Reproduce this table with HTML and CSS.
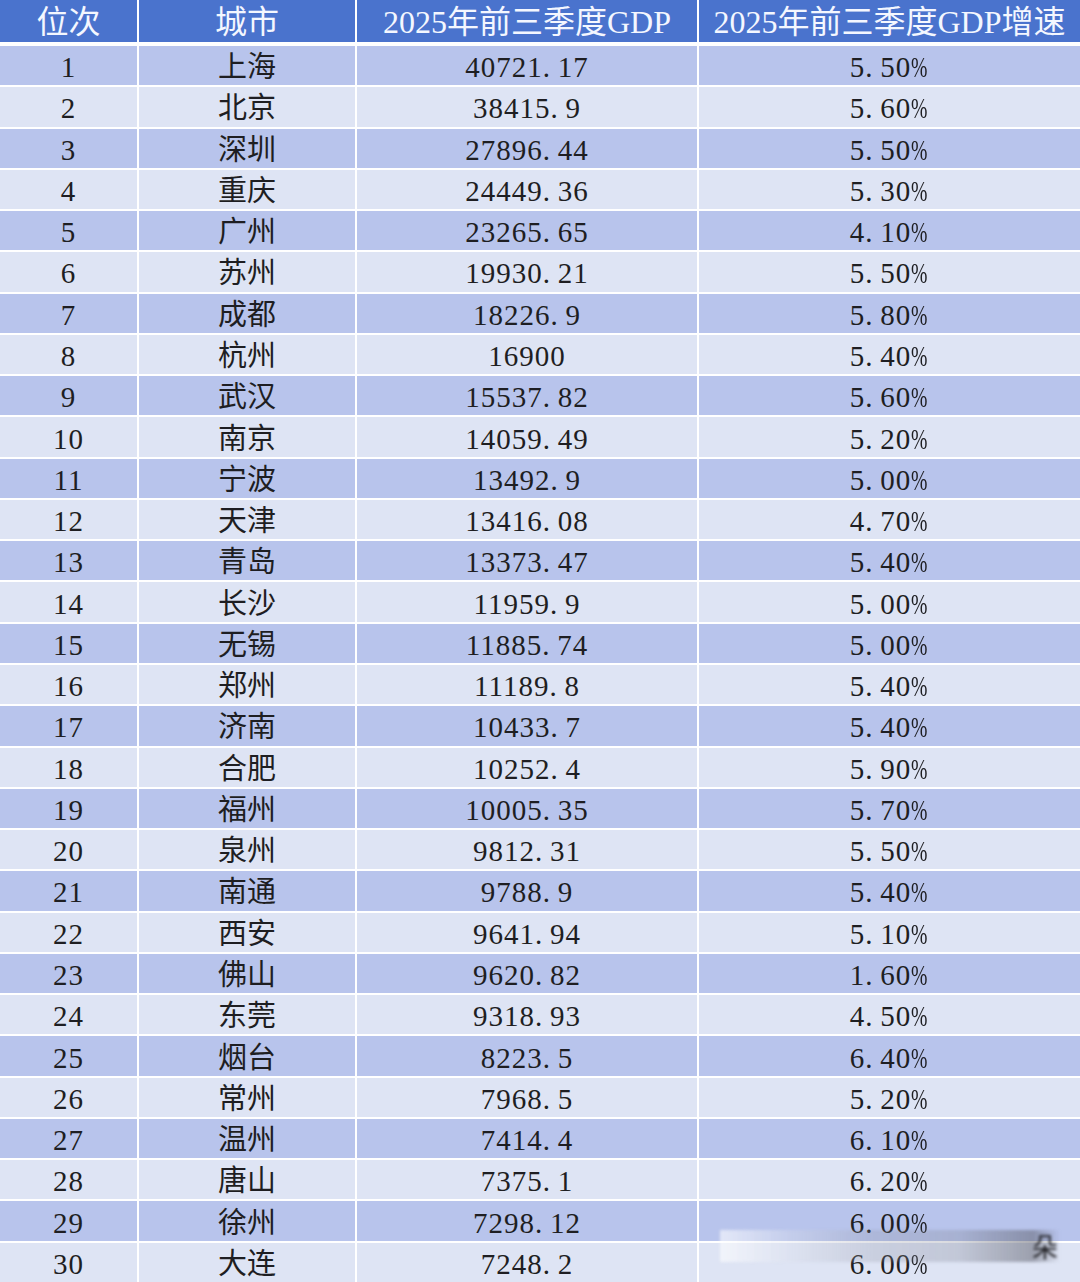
FILE: index.html
```html
<!DOCTYPE html>
<html lang="zh-CN">
<head>
<meta charset="utf-8">
<title>2025年前三季度GDP</title>
<link rel="stylesheet" href="styles.css">
</head>
<body>
<div class="sheet">
  <div class="row head">
    <div class="cell">位次</div>
    <div class="cell">城市</div>
    <div class="cell">2025年前三季度GDP</div>
    <div class="cell">2025年前三季度GDP增速</div>
  </div>
  <div class="body">
    <div class="row odd"><div class="cell num">1</div><div class="cell city">上海</div><div class="cell num">40721<span class="dt">.</span>17</div><div class="cell num">5<span class="dt">.</span>50<span class="pc">%</span></div></div>
    <div class="row even"><div class="cell num">2</div><div class="cell city">北京</div><div class="cell num">38415<span class="dt">.</span>9</div><div class="cell num">5<span class="dt">.</span>60<span class="pc">%</span></div></div>
    <div class="row odd"><div class="cell num">3</div><div class="cell city">深圳</div><div class="cell num">27896<span class="dt">.</span>44</div><div class="cell num">5<span class="dt">.</span>50<span class="pc">%</span></div></div>
    <div class="row even"><div class="cell num">4</div><div class="cell city">重庆</div><div class="cell num">24449<span class="dt">.</span>36</div><div class="cell num">5<span class="dt">.</span>30<span class="pc">%</span></div></div>
    <div class="row odd"><div class="cell num">5</div><div class="cell city">广州</div><div class="cell num">23265<span class="dt">.</span>65</div><div class="cell num">4<span class="dt">.</span>10<span class="pc">%</span></div></div>
    <div class="row even"><div class="cell num">6</div><div class="cell city">苏州</div><div class="cell num">19930<span class="dt">.</span>21</div><div class="cell num">5<span class="dt">.</span>50<span class="pc">%</span></div></div>
    <div class="row odd"><div class="cell num">7</div><div class="cell city">成都</div><div class="cell num">18226<span class="dt">.</span>9</div><div class="cell num">5<span class="dt">.</span>80<span class="pc">%</span></div></div>
    <div class="row even"><div class="cell num">8</div><div class="cell city">杭州</div><div class="cell num">16900</div><div class="cell num">5<span class="dt">.</span>40<span class="pc">%</span></div></div>
    <div class="row odd"><div class="cell num">9</div><div class="cell city">武汉</div><div class="cell num">15537<span class="dt">.</span>82</div><div class="cell num">5<span class="dt">.</span>60<span class="pc">%</span></div></div>
    <div class="row even"><div class="cell num">10</div><div class="cell city">南京</div><div class="cell num">14059<span class="dt">.</span>49</div><div class="cell num">5<span class="dt">.</span>20<span class="pc">%</span></div></div>
    <div class="row odd"><div class="cell num">11</div><div class="cell city">宁波</div><div class="cell num">13492<span class="dt">.</span>9</div><div class="cell num">5<span class="dt">.</span>00<span class="pc">%</span></div></div>
    <div class="row even"><div class="cell num">12</div><div class="cell city">天津</div><div class="cell num">13416<span class="dt">.</span>08</div><div class="cell num">4<span class="dt">.</span>70<span class="pc">%</span></div></div>
    <div class="row odd"><div class="cell num">13</div><div class="cell city">青岛</div><div class="cell num">13373<span class="dt">.</span>47</div><div class="cell num">5<span class="dt">.</span>40<span class="pc">%</span></div></div>
    <div class="row even"><div class="cell num">14</div><div class="cell city">长沙</div><div class="cell num">11959<span class="dt">.</span>9</div><div class="cell num">5<span class="dt">.</span>00<span class="pc">%</span></div></div>
    <div class="row odd"><div class="cell num">15</div><div class="cell city">无锡</div><div class="cell num">11885<span class="dt">.</span>74</div><div class="cell num">5<span class="dt">.</span>00<span class="pc">%</span></div></div>
    <div class="row even"><div class="cell num">16</div><div class="cell city">郑州</div><div class="cell num">11189<span class="dt">.</span>8</div><div class="cell num">5<span class="dt">.</span>40<span class="pc">%</span></div></div>
    <div class="row odd"><div class="cell num">17</div><div class="cell city">济南</div><div class="cell num">10433<span class="dt">.</span>7</div><div class="cell num">5<span class="dt">.</span>40<span class="pc">%</span></div></div>
    <div class="row even"><div class="cell num">18</div><div class="cell city">合肥</div><div class="cell num">10252<span class="dt">.</span>4</div><div class="cell num">5<span class="dt">.</span>90<span class="pc">%</span></div></div>
    <div class="row odd"><div class="cell num">19</div><div class="cell city">福州</div><div class="cell num">10005<span class="dt">.</span>35</div><div class="cell num">5<span class="dt">.</span>70<span class="pc">%</span></div></div>
    <div class="row even"><div class="cell num">20</div><div class="cell city">泉州</div><div class="cell num">9812<span class="dt">.</span>31</div><div class="cell num">5<span class="dt">.</span>50<span class="pc">%</span></div></div>
    <div class="row odd"><div class="cell num">21</div><div class="cell city">南通</div><div class="cell num">9788<span class="dt">.</span>9</div><div class="cell num">5<span class="dt">.</span>40<span class="pc">%</span></div></div>
    <div class="row even"><div class="cell num">22</div><div class="cell city">西安</div><div class="cell num">9641<span class="dt">.</span>94</div><div class="cell num">5<span class="dt">.</span>10<span class="pc">%</span></div></div>
    <div class="row odd"><div class="cell num">23</div><div class="cell city">佛山</div><div class="cell num">9620<span class="dt">.</span>82</div><div class="cell num">1<span class="dt">.</span>60<span class="pc">%</span></div></div>
    <div class="row even"><div class="cell num">24</div><div class="cell city">东莞</div><div class="cell num">9318<span class="dt">.</span>93</div><div class="cell num">4<span class="dt">.</span>50<span class="pc">%</span></div></div>
    <div class="row odd"><div class="cell num">25</div><div class="cell city">烟台</div><div class="cell num">8223<span class="dt">.</span>5</div><div class="cell num">6<span class="dt">.</span>40<span class="pc">%</span></div></div>
    <div class="row even"><div class="cell num">26</div><div class="cell city">常州</div><div class="cell num">7968<span class="dt">.</span>5</div><div class="cell num">5<span class="dt">.</span>20<span class="pc">%</span></div></div>
    <div class="row odd"><div class="cell num">27</div><div class="cell city">温州</div><div class="cell num">7414<span class="dt">.</span>4</div><div class="cell num">6<span class="dt">.</span>10<span class="pc">%</span></div></div>
    <div class="row even"><div class="cell num">28</div><div class="cell city">唐山</div><div class="cell num">7375<span class="dt">.</span>1</div><div class="cell num">6<span class="dt">.</span>20<span class="pc">%</span></div></div>
    <div class="row odd"><div class="cell num">29</div><div class="cell city">徐州</div><div class="cell num">7298<span class="dt">.</span>12</div><div class="cell num">6<span class="dt">.</span>00<span class="pc">%</span></div></div>
    <div class="row even"><div class="cell num">30</div><div class="cell city">大连</div><div class="cell num">7248<span class="dt">.</span>2</div><div class="cell num">6<span class="dt">.</span>00<span class="pc">%</span></div></div>
  </div>
  <div class="smear" aria-hidden="true"><span class="smear-glyph">朵</span></div>
</div>
</body>
</html>
```

FILE: styles.css
```css
html, body {
  margin: 0;
  padding: 0;
  background: #ffffff;
}

.sheet {
  position: relative;
  width: 1080px;
  height: 1282px;
  overflow: hidden;
  background: #ffffff;
  font-family: "Liberation Serif", "Noto Sans CJK SC", serif;
  color: #1e1e22;
}

.row {
  display: grid;
  grid-template-columns: 137px 216px 340px 1fr;
  column-gap: 2px;
}

.cell {
  display: flex;
  align-items: center;
  justify-content: center;
  white-space: nowrap;
}

.head {
  height: 42px;
}

.head .cell {
  background: #4a73cd;
  color: #f4f7ff;
  font-size: 32px;
  line-height: 1;
  padding-top: 1px;
}

.body {
  margin-top: 4px;
  display: flex;
  flex-direction: column;
  gap: 2px;
}

.body .row {
  height: 39.27px;
}

.odd .cell {
  background: #b8c4ec;
}

.even .cell {
  background: #dee4f4;
}

.body .cell {
  font-size: 29px;
  line-height: 1;
  padding-top: 4px;
}

.num {
  letter-spacing: 1px;
}

.city {
  font-weight: 400;
}

.dt {
  display: inline-block;
  width: 15px;
  text-align: left;
}

.pc {
  display: inline-block;
  width: 18px;
  letter-spacing: 0;
  transform: scaleX(0.68);
  transform-origin: left center;
}

.smear {
  position: absolute;
  left: 720px;
  top: 1230px;
  width: 340px;
  height: 32px;
  background: linear-gradient(to right,
    rgba(255,255,255,0.6) 0%,
    rgba(220,224,236,0.35) 20%,
    rgba(140,144,160,0.25) 45%,
    rgba(130,134,150,0.3) 70%,
    rgba(90,92,104,0.5) 92%,
    rgba(255,255,255,0) 100%);
  filter: blur(1.5px);
}

.smear-glyph {
  position: absolute;
  right: 2px;
  top: 0;
  font-family: "Noto Sans CJK SC", sans-serif;
  font-size: 26px;
  line-height: 32px;
  color: #202024;
}
```
